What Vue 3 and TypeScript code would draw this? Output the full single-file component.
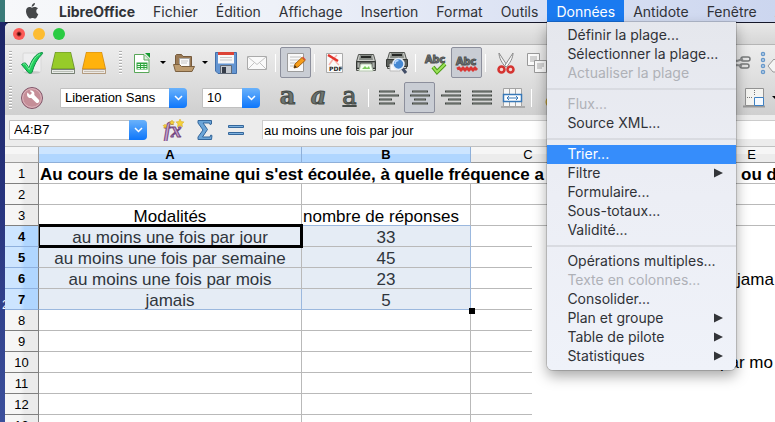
<script setup lang="ts">
interface MenuEntry {
  label?: string
  disabled?: boolean
  submenu?: boolean
  separator?: boolean
  active?: boolean
}

const dataMenu: MenuEntry[] = [
  { label: 'Définir la plage...' },
  { label: 'Sélectionner la plage...' },
  { label: 'Actualiser la plage', disabled: true },
  { separator: true },
  { label: 'Flux...', disabled: true },
  { label: 'Source XML...' },
  { separator: true },
  { label: 'Trier...', active: true },
  { label: 'Filtre', submenu: true },
  { label: 'Formulaire...' },
  { label: 'Sous-totaux...' },
  { label: 'Validité...' },
  { separator: true },
  { label: 'Opérations multiples...' },
  { label: 'Texte en colonnes...', disabled: true },
  { label: 'Consolider...' },
  { label: 'Plan et groupe', submenu: true },
  { label: 'Table de pilote', submenu: true },
  { label: 'Statistiques', submenu: true },
]

const menusBefore: string[] = ['Fichier', 'Édition', 'Affichage', 'Insertion', 'Format', 'Outils']
const menusAfter: string[] = ['Antidote', 'Fenêtre', 'A']

interface Row {
  n: number
  a: string
  b: string
}

const rows: Row[] = [
  { n: 2, a: '', b: '' },
  { n: 3, a: 'Modalités', b: 'nombre de réponses' },
  { n: 4, a: 'au moins une fois par jour', b: '33' },
  { n: 5, a: 'au moins une fois par semaine', b: '45' },
  { n: 6, a: 'au moins une fois par mois', b: '23' },
  { n: 7, a: 'jamais', b: '5' },
  ...[8, 9, 10, 11, 12, 13].map((n) => ({ n, a: '', b: '' })),
]

const isSelected = (n: number): boolean => n >= 4 && n <= 7
</script>

<template>
  <div class="screen">
    <aside class="desktop"><span class="desktop-label">2</span></aside>
    <div class="main">
      <nav class="menubar">
        <button class="menu apple" aria-label="Pomme">
          <svg width="14" height="16" viewBox="0 0 14 16">
            <path fill="#454749" d="M9.900 0c.1 1-.3 1.900-.9 2.600-.6.700-1.500 1.200-2.300 1.100-.1-.9.300-1.900.9-2.500C8.200.5 9.200.1 9.900 0zM12.900 5.500c-1 .6-1.600 1.500-1.600 2.700 0 1.400.8 2.400 2 2.900-.3 1-.8 1.900-1.400 2.800-.6.900-1.200 1.700-2.100 1.700-.9 0-1.200-.5-2.300-.5s-1.400.5-2.300.5c-.9 0-1.600-.9-2.200-1.800C1.700 12 1 9.900 1 8.200c0-2.700 1.700-4.100 3.500-4.100 1 0 1.800.6 2.500.6.600 0 1.600-.7 2.800-.7 1.200 0 2.400.5 3.100 1.500z" />
          </svg>
        </button>
        <button class="menu app-name">LibreOffice</button>
        <button v-for="m in menusBefore" :key="m" class="menu">{{ m }}</button>
        <div class="menu-open">
          <button class="menu current">Données</button>
          <div class="dropdown" role="menu">
            <template v-for="(e, i) in dataMenu" :key="i">
              <hr v-if="e.separator" />
              <button v-else class="entry" :class="{ active: e.active }" :disabled="e.disabled" role="menuitem">
                <span>{{ e.label }}</span>
                <svg v-if="e.submenu" width="9" height="10" viewBox="0 0 9 10"><path d="M0 .5 9 5 0 9.500z" fill="#333539" /></svg>
              </button>
            </template>
          </div>
        </div>
        <button v-for="m in menusAfter" :key="m" class="menu">{{ m }}</button>
      </nav>

      <div class="window">
        <header class="titlebar">
          <button class="light red" aria-label="Fermer"></button>
          <button class="light yellow" aria-label="Réduire"></button>
          <button class="light green" aria-label="Agrandir"></button>
        </header>

        <div class="toolbars">
          <div class="toolbar">
            <i class="grip"></i>
            <button class="tool" aria-label="Correcteur">
              <svg width="24" height="24" viewBox="0 0 24 24">
                <rect x="3" y="2" width="18" height="19" rx="1" fill="#eeeeef" stroke="#d8d8d8" />
                <ellipse cx="12" cy="21.500" rx="8" ry="1.500" fill="#bbb" opacity=".6" />
                <path d="M1.500 13.500c1.500-1.500 3.500-2 4.500-1l3 4.500C11.500 9 15.500 2.500 22 1.500c1 0 .8.800.2 1.500C17 8 14 14 12 21.500c-.6 1-3 1-3.800 0z" fill="#20cf5c" stroke="#0c8c43" />
                <path d="M3 13.500c1-1 2-1 2.700 0l3.500 5C12 11 15 5.500 20 3" fill="none" stroke="#7af09f" />
              </svg>
            </button>
            <button class="tool" aria-label="Dictionnaires">
              <svg width="26" height="24" viewBox="0 0 26 24">
                <path d="M5 1h16l4 17v4.500H1V18z" fill="#668c2d" />
                <path d="M5.500 1.500h15L24 17.500H2z" fill="#97cb29" />
                <path d="M1.500 18.500h23v4h-23z" fill="#e9ece8" stroke="#778075" />
                <path d="M3 20.500h20" stroke="#bbc0b8" />
              </svg>
            </button>
            <button class="tool" aria-label="Guides">
              <svg width="26" height="24" viewBox="0 0 26 24">
                <path d="M5 1h16l4 17v4.500H1V18z" fill="#cf8b18" />
                <path d="M5.500 1.500h15L24 17.500H2z" fill="#ffb20c" />
                <path d="M1.500 18.500h23v4h-23z" fill="#ece9e4" stroke="#b39b80" />
                <path d="M3 20.500h20" stroke="#c7beb2" />
              </svg>
            </button>
            <i class="grip second"></i>
            <button class="tool" aria-label="Nouveau">
              <svg width="18" height="22" viewBox="0 0 18 22">
                <path d="M1.500 2.500H11l5 5v13H1.500z" fill="#fff" stroke="#58a758" />
                <path d="M11 3v5h5" fill="#dff2df" stroke="#58a758" />
                <path d="M12 1h5v5z" fill="#149b30" />
                <path d="M3.500 10.500h11v7h-11z" fill="#2ea43d" />
                <path d="M4.500 12h2.500v1H4.500zM8 12h2.500v1H8zM11.500 12h2v1h-2zM4.500 14h2.500v1H4.500zM8 14h2.500v1H8zM11.500 14h2v1h-2zM4.500 16h2.500v1H4.500zM8 16h2.500v1H8zM11.500 16h2v1h-2z" fill="#e9fbe9" />
              </svg>
            </button>
            <button class="drop" aria-label="Modèles"></button>
            <button class="tool" aria-label="Ouvrir">
              <svg width="24" height="22" viewBox="0 0 24 22">
                <path d="M3.500 17V3.500l1-1h5l1.500 2h8.500V17z" fill="#9a7a55" stroke="#765a3c" />
                <path d="M7.500 6.500h10v9h-10z" fill="#fafafa" stroke="#aaa" />
                <path d="M9 9h7M9 11h6" stroke="#c5c5c5" />
                <path d="M1.500 12.500h6l2 2h13L20 19.500H3.500z" fill="#bd9c70" stroke="#7b6040" />
              </svg>
            </button>
            <button class="drop" aria-label="Fichiers récents"></button>
            <button class="tool" aria-label="Enregistrer">
              <svg width="24" height="24" viewBox="0 0 24 24">
                <path d="M1.500 1.500h21v21H4l-2.500-2.500z" fill="#6495d1" stroke="#426fa8" />
                <path d="M4 2h16v10.500H4z" fill="#f8f8f8" />
                <path d="M4 1h16v3H4z" fill="#dc4336" />
                <path d="M6 6.500h12M6 9h12" stroke="#c8c8c8" />
                <path d="M6.500 14.500h11v8h-11z" fill="#c4c9cf" stroke="#616a76" />
                <path d="M8 16h4v6H8z" fill="#353c48" />
              </svg>
            </button>
            <button class="tool" aria-label="Courriel">
              <svg width="22" height="16" viewBox="0 0 22 16">
                <path d="M1.500 1.500h19v13h-19z" fill="#fafafa" stroke="#aaa" />
                <path d="m2 2 9 7.500L20 2M2 14l6.500-6.500M20 14l-6.500-6.500" fill="none" stroke="#c3c3c3" />
              </svg>
            </button>
            <i class="sep"></i>
            <button class="tool pressed" aria-label="Mode édition">
              <svg width="22" height="22" viewBox="0 0 22 22">
                <path d="M2.500 1.500h16v18h-16z" fill="#f9f9f9" stroke="#9c9c9c" />
                <path d="M5 5h11M5 8h11M5 11h8M5 14h5" stroke="#c1c1c1" />
                <path d="m9 16 1-4 7-6.500 3 3-7 6.500z" fill="#f69d1a" stroke="#a8610c" />
                <path d="m9 16 .8-3 2 2.200z" fill="#3c2c17" />
                <path d="m17 5.500 3 3 .8-1-2.800-3z" fill="#d84d37" />
              </svg>
            </button>
            <i class="sep"></i>
            <button class="tool" aria-label="Exporter en PDF">
              <svg width="20" height="22" viewBox="0 0 20 22">
                <path d="M1.500 1.500h16v19h-16z" fill="#fafafa" stroke="#aaa" />
                <path d="M3 3c5 1 7 7 11 10M12 3C9 6 7 8 4 13" fill="none" stroke="#f7b4ae" stroke-width="1.500" />
                <path d="m3 3 10 6" stroke="#e2332b" stroke-width="2.500" />
                <text x="4" y="19" class="pdf-text">PDF</text>
              </svg>
            </button>
            <button class="tool" aria-label="Imprimer">
              <svg width="24" height="22" viewBox="0 0 24 22">
                <path d="M4.500 2.500h15l2 7v9h-19v-9z" fill="#c8cac6" stroke="#50534f" />
                <path d="M6 3h12l1 5H5z" fill="#888d88" /><path d="M7 5h10" stroke="#252725" stroke-width="2" />
                <path d="M2.500 9.500h19v7h-19z" fill="#5b5f5b" stroke="#353835" />
                <path d="M3.500 10.500h2v5h-2zM18.500 10.500h2v5h-2z" fill="#a9ada8" />
                <path d="m7 12h10l2 7H5z" fill="#f4fff0" stroke="#b8c7b3" />
                <path d="m8 17 3-3 2 2 2-2 1 3z" fill="#79cc5c" />
              </svg>
            </button>
            <button class="tool" aria-label="Aperçu">
              <svg width="24" height="24" viewBox="0 0 24 24">
                <path d="M4.500 1.500h15l2 7v9h-19v-9z" fill="#c8cac6" stroke="#50534f" />
                <path d="M6 2h12l1 5H5z" fill="#888d88" /><path d="M7 4h10" stroke="#252725" stroke-width="2" />
                <path d="M1.500 8.500h21v7h-21z" fill="#5b5f5b" stroke="#353835" />
                <path d="M5 13h10v7H5z" fill="#f8f8f8" stroke="#bbb" />
                <path d="m17 17 4 5" stroke="#424e67" stroke-width="3" />
                <circle cx="13.500" cy="13" r="5.500" fill="#4588d2" stroke="#e5eef9" stroke-width="1.500" />
                <path d="M10 13c0-2 1.500-3.500 3.500-3.500" fill="none" stroke="#b5d7ff" stroke-width="1.500" />
              </svg>
            </button>
            <i class="sep"></i>
            <button class="tool" aria-label="Orthographe">
              <svg width="24" height="24" viewBox="0 0 24 24">
                <text x="1" y="12" class="abc">Abc</text>
                <path d="m9 16 4 5 8-8" fill="none" stroke="#4d9c18" stroke-width="4" />
                <path d="m9 16 4 5 8-8" fill="none" stroke="#9ce25a" stroke-width="2" />
              </svg>
            </button>
            <button class="tool pressed" aria-label="Vérification automatique">
              <svg width="24" height="24" viewBox="0 0 24 24">
                <text x="1" y="14" class="abc">Abc</text>
                <path d="m2 18 2-1 2 2 2-2 2 2 2-2 2 2 2-2 2 2 2-2 2 2" fill="none" stroke="#da3734" stroke-width="3" />
              </svg>
            </button>
            <i class="sep"></i>
            <button class="tool" aria-label="Couper">
              <svg width="20" height="24" viewBox="0 0 20 24">
                <path d="m3 2 8.500 13-2 1C6 12 3 7 3 2z" fill="#f2f2f2" stroke="#8a8a8a" />
                <path d="M17 2 8.500 15l2 1C14 12 17 7 17 2z" fill="#fafafa" stroke="#8a8a8a" />
                <circle cx="5.500" cy="18.500" r="3" fill="#f4d6d3" stroke="#d53431" stroke-width="2.500" />
                <circle cx="14.500" cy="18.500" r="3" fill="#f4d6d3" stroke="#d53431" stroke-width="2.500" />
              </svg>
            </button>
            <button class="tool" aria-label="Copier">
              <svg width="22" height="22" viewBox="0 0 22 22">
                <path d="M1.500 1.500h12v12h-12z" fill="#fafafa" stroke="#999" /><path d="M4 5h7M4 7h7M4 9h5" stroke="#aaa" />
                <path d="M8.500 8.500h12v12h-12z" fill="#fafafa" stroke="#999" /><path d="M11 12h7M11 14h7M11 16h5" stroke="#aaa" />
              </svg>
            </button>
            <i class="covered"></i>
            <button class="tool" aria-label="Hyperlien">
              <svg width="26" height="14" viewBox="0 0 26 14">
                <g fill="none" stroke="#77797a" stroke-width="1.500"><rect x="1" y="2" width="8" height="4" rx="2" /><rect x="15" y="1" width="9" height="4" rx="2" /><rect x="1" y="8" width="8" height="4" rx="2" /><rect x="14" y="8" width="9" height="4" rx="2" /></g>
                <path d="m7 4 4 1 6-2M7 10l4-1 5 1" fill="none" stroke="#8d8f90" stroke-width="2" />
              </svg>
            </button>
            <button class="tool" aria-label="Dessin">
              <svg width="30" height="24" viewBox="0 0 30 24">
                <g fill="#fff" stroke="#6798ca" stroke-width="1.500"><circle cx="8" cy="3" r="1.500" /><circle cx="8" cy="9" r="1.500" /><circle cx="8" cy="15" r="1.500" /><circle cx="8" cy="21" r="1.500" /></g>
                <path d="m13 15 6-7 4 4v9h-5z" fill="#f4f4f4" stroke="#999" />
              </svg>
            </button>
          </div>

          <div class="toolbar lower">
            <i class="grip"></i>
            <button class="tool" aria-label="Options">
              <svg width="24" height="24" viewBox="0 0 24 24">
                <circle cx="12" cy="12" r="10.500" fill="#c58e98" stroke="#80566a" />
                <circle cx="12" cy="12" r="9.300" fill="none" stroke="#dfb8c0" />
                <path d="M7.500 6.500 10 9l2-2-2.300-2.200c2.800-.8 5.300 1.200 4.600 4.200l4.500 4.700c1.600 1.900-1 4.300-2.800 2.700l-4.700-4.500C8.300 12.700 6 9.800 7.500 6.500z" fill="#fff" />
              </svg>
            </button>
            <label class="combo font">
              <select aria-label="Police"><option>Liberation Sans</option></select>
              <span class="chev"><svg width="9" height="6" viewBox="0 0 9 6"><path d="m1 1 3.500 3.500L8 1" fill="none" stroke="#fff" stroke-width="1.500" /></svg></span>
            </label>
            <label class="combo size">
              <select aria-label="Taille"><option>10</option></select>
              <span class="chev"><svg width="9" height="6" viewBox="0 0 9 6"><path d="m1 1 3.500 3.500L8 1" fill="none" stroke="#fff" stroke-width="1.500" /></svg></span>
            </label>
            <button class="tool letter bold">a</button>
            <button class="tool letter italic">a</button>
            <button class="tool letter under">a</button>
            <i class="sep"></i>
            <button class="tool" aria-label="Aligner à gauche">
              <svg width="22" height="18" viewBox="0 0 22 18"><path d="M1 2.500h16M1 6.500h20M1 10.500h13M1 14.500h16" stroke="#3f4440" stroke-width="2" /><path d="M2 3h14M2 7h18M2 11h11M2 15h14" stroke="#90958f" /></svg>
            </button>
            <button class="tool pressed" aria-label="Centrer">
              <svg width="22" height="18" viewBox="0 0 22 18"><path d="M3 2.500h16M1 6.500h20M5 10.500h12M3 14.500h16" stroke="#3f4440" stroke-width="2" /><path d="M4 3h14M2 7h18M6 11h10M4 15h14" stroke="#90958f" /></svg>
            </button>
            <button class="tool" aria-label="Aligner à droite">
              <svg width="22" height="18" viewBox="0 0 22 18"><path d="M5 2.500h16M1 6.500h20M8 10.500h13M5 14.500h16" stroke="#3f4440" stroke-width="2" /><path d="M6 3h14M2 7h18M9 11h11M6 15h14" stroke="#90958f" /></svg>
            </button>
            <button class="tool" aria-label="Justifier">
              <svg width="22" height="18" viewBox="0 0 22 18"><path d="M1 2.500h20M1 6.500h20M1 10.500h20M1 14.500h20" stroke="#3f4440" stroke-width="2" /><path d="M2 3h18M2 7h18M2 11h18M2 15h18" stroke="#90958f" /></svg>
            </button>
            <button class="tool" aria-label="Fusionner">
              <svg width="24" height="22" viewBox="0 0 24 22">
                <path d="M0 19h24v2H0z" fill="#aaa" />
                <path d="M2.500 1.500h18v18h-18zM8.500 1.500v18M14.500 1.500v18" fill="#f6f6f6" stroke="#a3a3a3" />
                <path d="M2.500 7.500h18v7h-18z" fill="#fff" stroke="#3778b8" stroke-width="1.500" />
                <path d="M6 11h11M8 9l-2 2 2 2M15 9l2 2-2 2" fill="none" stroke="#3778b8" />
              </svg>
            </button>
            <i class="sep"></i>
            <button class="tool" aria-label="Format monétaire">
              <svg width="22" height="22" viewBox="0 0 22 22"><circle cx="11" cy="15" r="6" fill="#e8c84b" stroke="#b8962c" /></svg>
            </button>
            <i class="covered"></i>
            <button class="tool" aria-label="Bordures">
              <svg width="24" height="22" viewBox="0 0 24 22">
                <path d="M1 18.500h22v2H1z" fill="#999" />
                <path d="M3.500 1.500h18v17h-18z" fill="#f4f4f1" stroke="#929292" />
                <path d="M12.500 3v6M5 10.500h6" stroke="#777" stroke-dasharray="1 1" />
                <path d="M12.500 10.500h9v8h-9z" fill="#f5faff" stroke="#3f81c2" />
              </svg>
            </button>
            <button class="drop" aria-label="Styles de bordure"></button>
          </div>
        </div>

        <div class="formula-bar">
          <label class="combo name">
            <input aria-label="Zone de nom" value="A4:B7" />
            <span class="chev"><svg width="9" height="6" viewBox="0 0 9 6"><path d="m1 1 3.500 3.500L8 1" fill="none" stroke="#fff" stroke-width="1.500" /></svg></span>
          </label>
          <button class="tool" aria-label="Assistant Fonctions">
            <svg width="24" height="22" viewBox="0 0 24 22">
              <text x="2" y="18" class="fx-text">fx</text>
              <g fill="#f4d13c" stroke="#d8a919" stroke-width=".5"><path d="m18 0 1.200 2.500 2.800.4-2 2 .5 2.800L18 6.400l-2.500 1.300.5-2.800-2-2 2.800-.4z" /><path d="m10 1 .8 1.600 1.700.3-1.200 1.200.3 1.700L10 5l-1.600.8.3-1.700-1.200-1.200 1.700-.3z" /><path d="m3 5 .6 1.300 1.400.2-1 1 .2 1.400L3 8.200l-1.200.7.200-1.400-1-1 1.400-.2z" /></g>
            </svg>
          </button>
          <button class="tool" aria-label="Somme">
            <svg width="18" height="22" viewBox="0 0 18 22"><path d="M2 1.500h13.500V5l-1.500.5-.5-1.500H7l4.500 6.500L6.500 18H14l.8-2 1.200.5-.5 4H2V18l5-7-5-7z" fill="#6ba5d8" stroke="#35679b" /></svg>
          </button>
          <button class="tool" aria-label="Fonction">
            <svg width="18" height="16" viewBox="0 0 18 16"><path d="M1.500 3.500h15v2h-15zM1.500 10.500h15v2h-15z" fill="#7eb2e0" stroke="#35679b" /></svg>
          </button>
          <input class="content" aria-label="Ligne de saisie" value="au moins une fois par jour" />
        </div>

        <div class="sheet">
          <table>
            <colgroup><col class="c-num" /><col class="c-a" /><col class="c-b" /><col class="c-c" /><col class="c-c" /><col /></colgroup>
            <thead>
              <tr><th></th><th class="sel">A</th><th class="sel">B</th><th>C</th><th>D</th><th>E</th></tr>
            </thead>
            <tbody>
              <tr>
                <th>1</th>
                <td colspan="5" class="question"><span>Au cours de la semaine qui s'est écoulée, à quelle fréquence a</span><span class="tail">n ou d</span></td>
              </tr>
              <tr v-for="r in rows" :key="r.n" :class="{ picked: isSelected(r.n), final: r.n === 7, before: r.n === 3 }">
                <th>{{ r.n }}</th>
                <td :class="{ cursor: r.n === 4 }">{{ r.a }}</td>
                <td :class="{ start: r.n === 3, handle: r.n === 7 }">{{ r.b }}</td>
                <td></td>
                <td></td>
                <td></td>
              </tr>
            </tbody>
          </table>
          <div class="chart">
            <span class="legend never">jama</span>
            <span class="legend month">par mo</span>
          </div>
        </div>
      </div>
    </div>
  </div>
</template>

<style>
body {
  margin: 0;
  overflow: hidden;
}
</style>

<style scoped>
* {
  box-sizing: border-box;
}
button,
input,
select {
  margin: 0;
  padding: 0;
  border: 0;
  background: none;
  font: inherit;
  color: inherit;
  border-radius: 0;
  outline: 0;
}
svg {
  display: block;
}
.screen {
  display: grid;
  grid-template-columns: 5px minmax(0, 1fr);
  height: 100vh;
  overflow: hidden;
  font-family: 'Liberation Sans', sans-serif;
  font-size: 13px;
  color: #000;
  background: linear-gradient(#3a7a78 22px, #1c2566 22px, #28357f 50%, #3c509c);
}
.desktop {
  position: relative;
  overflow: hidden;
}
.desktop-label {
  position: absolute;
  left: 2px;
  top: 298px;
  color: #fff;
  font-size: 12px;
}
.main {
  display: flex;
  flex-direction: column;
  min-height: 0;
}
.menubar {
  position: relative;
  z-index: 2;
  display: flex;
  flex: none;
  height: 23px;
  padding-left: 11px;
  border-bottom: 1px solid #16182a;
  background: linear-gradient(90deg, #f7f8fa, #eef1f8 35%, #dae1f3 70%, #ccd6ef);
  font-family: Inter, sans-serif;
  font-size: 14px;
  color: #303237;
}
.menu {
  flex: none;
  height: 22px;
  padding: 0 9px;
  white-space: nowrap;
}
.apple {
  width: 34px;
}
.app-name {
  font-weight: 700;
}
.menu-open {
  position: relative;
  flex: none;
}
.current {
  background: #1a7af0;
  color: #fff;
}
.dropdown {
  position: absolute;
  top: 22px;
  left: 0;
  width: 189px;
  padding: 4px 0;
  border-radius: 0 0 6px 6px;
  background: linear-gradient(#e5e7ed, #eceef5 50%, #eff2f9);
  box-shadow: 0 0 0 1px rgba(0, 0, 0, 0.15), 0 6px 14px rgba(0, 0, 0, 0.35);
}
.entry {
  display: flex;
  align-items: center;
  justify-content: space-between;
  width: 100%;
  height: 19px;
  padding: 0 13px 2px 20px;
  text-align: left;
  white-space: nowrap;
}
.entry:disabled {
  color: #afb1b7;
}
.entry.active {
  background: #368dfb;
  color: #fff;
}
hr {
  height: 2px;
  margin: 5px 0;
  border: 0;
  background: #d9dbe1;
}
.window {
  display: flex;
  flex: 1;
  flex-direction: column;
  min-height: 0;
  overflow: hidden;
  border-top-left-radius: 5px;
  background: #fff;
}
.titlebar {
  display: flex;
  flex: none;
  gap: 8px;
  align-items: center;
  height: 22px;
  padding-left: 8px;
  border-bottom: 1px solid #b5b5b5;
  background: linear-gradient(#e8e8e8, #d6d6d6);
}
.light {
  width: 12px;
  height: 12px;
  border-radius: 50%;
}
.red {
  background: radial-gradient(circle, #4d0907 1px, #fc5b57 3px);
}
.yellow {
  background: #fdbc31;
}
.green {
  background: #2acb42;
}
.toolbars {
  flex: none;
  background: linear-gradient(#ededed, #cfcfcf);
}
.toolbar {
  display: flex;
  align-items: center;
  height: 35px;
  padding-left: 4px;
  overflow: hidden;
}
.toolbar > * {
  flex: none;
}
.grip {
  width: 3px;
  height: 24px;
  margin-right: 4px;
  background: repeating-linear-gradient(#b0b0b0 0 1px, #fff 1px 2px, transparent 2px 3px);
}
.grip.second {
  margin: 0 4px 0 10px;
}
.tool {
  display: flex;
  align-items: center;
  justify-content: center;
  width: 31px;
  height: 31px;
}
.pressed {
  border: 1px solid #8c8f9c;
  border-radius: 2px;
  background: #c9cdd4;
}
.drop {
  width: 11px;
  height: 31px;
}
.drop::before {
  content: '';
  display: block;
  width: 0;
  margin: 0 auto;
  border: 3px solid transparent;
  border-top-color: #000;
  border-bottom: 0;
}
.sep {
  width: 1px;
  height: 18px;
  margin: 0 4px 0 3px;
  background: #fff;
}
.covered {
  width: 171px;
}
.pdf-text {
  font: 700 6px 'DejaVu Sans', sans-serif;
  fill: #222;
}
.abc {
  font: 700 11px 'Open Sans', sans-serif;
  fill: #8b8f8f;
  stroke: #4c5050;
  stroke-width: 1px;
}
.fx-text {
  font: italic 700 21px 'Liberation Serif', serif;
  fill: #c4a0cc;
  stroke: #74477f;
  stroke-width: 1px;
}
.combo {
  display: flex;
  height: 20px;
  border: 1px solid #c0c0c0;
  border-radius: 0 4px 4px 0;
  background: #fff;
}
.combo select,
.combo input {
  flex: 1;
  min-width: 0;
  padding-left: 4px;
  appearance: none;
}
.combo .chev {
  display: flex;
  align-items: center;
  justify-content: center;
  width: 18px;
  margin: -1px;
  border-radius: 0 4px 4px 0;
  background: linear-gradient(#6ab2fb, #0d76fb);
}
.font {
  width: 127px;
  margin-left: 13px;
}
.size {
  width: 58px;
  margin: 0 12px 0 15px;
}
.letter {
  padding-bottom: 4px;
  font: 700 24px/20px 'DejaVu Serif', serif;
  color: #6d746f;
  -webkit-text-stroke: 1px #454b47;
}
.italic {
  font-style: italic;
}
.under {
  font-weight: 400;
  text-decoration: underline;
  text-decoration-thickness: 2px;
}
.formula-bar {
  display: flex;
  flex: none;
  align-items: center;
  height: 32px;
  padding: 0 0 2px 4px;
  border-bottom: 1px solid #c0c0c0;
  background: #ececec;
}
.formula-bar > * {
  flex: none;
}
.name {
  width: 138px;
  margin-right: 11px;
}
.formula-bar .content {
  flex: 1;
  min-width: 0;
  height: 19px;
  margin-left: 11px;
  padding-left: 1px;
  border: 1px solid #ccc;
  border-width: 1px 0 0 1px;
  background: #fff;
}
.sheet {
  position: relative;
  flex: 1;
  min-height: 0;
  overflow: hidden;
}
table {
  width: calc(100% + 28px);
  table-layout: fixed;
  border-collapse: separate;
  border-spacing: 0;
}
.c-num {
  width: 34px;
}
.c-a {
  width: 263px;
}
.c-b {
  width: 169px;
}
.c-c {
  width: 115px;
}
tr {
  height: 21px;
}
thead tr {
  height: 16px;
}
th,
td {
  padding: 0;
  border-right: 1px solid #b9b9b9;
  border-bottom: 1px solid #b9b9b9;
  line-height: 15px;
  text-align: center;
  white-space: nowrap;
}
th {
  font-weight: 400;
}
thead th {
  border-color: #9a9a9a;
  background: linear-gradient(#f6f6f6 50%, #ececec 50%);
}
thead .sel {
  border-color: #8fb0d9;
  background: linear-gradient(#cde5ff 50%, #b0d6ff 50%);
  font-weight: 700;
}
tbody th {
  border-color: #808080;
  background: linear-gradient(90deg, #f6f6f6 45%, #ebebeb 60%);
}
.picked th {
  border-bottom-color: #8fb0dd;
  background: linear-gradient(90deg, #cde5ff 45%, #b0d6ff 60%);
  font-weight: 700;
}
td {
  position: relative;
  padding-top: 3px;
  font-size: 17px;
  line-height: 17px;
}
.picked td:nth-child(-n + 3) {
  background: #e5ecf5;
  color: #2f353c;
}
.picked td:nth-child(3),
.final td:nth-child(-n + 3) {
  border-right-color: #9bb8de;
}
.final td:nth-child(-n + 3),
.before td:nth-child(3) {
  border-bottom-color: #9bb8de;
}
.start {
  text-align: left;
  padding-left: 1px;
}
.question {
  padding-left: 1px;
  border-right: 0;
  font-weight: 700;
  text-align: left;
}
.question .tail {
  position: absolute;
  left: 687px;
}
.cursor {
  z-index: 1;
}
.cursor::after {
  content: '';
  position: absolute;
  inset: -2px -2px -2px 0;
  border: 3px solid #000;
  border-left-width: 1px;
}
.handle::after {
  content: '';
  position: absolute;
  right: -5px;
  bottom: -5px;
  z-index: 1;
  width: 6px;
  height: 6px;
  background: #000;
}
.chart {
  position: absolute;
  inset: 79px 0 0 527px;
  overflow: hidden;
  background: #fff;
}
.legend {
  position: absolute;
  font-size: 17px;
  line-height: 20px;
  white-space: nowrap;
}
.never {
  left: 205px;
  top: 44px;
}
.month {
  left: 188px;
  top: 127px;
}
</style>
